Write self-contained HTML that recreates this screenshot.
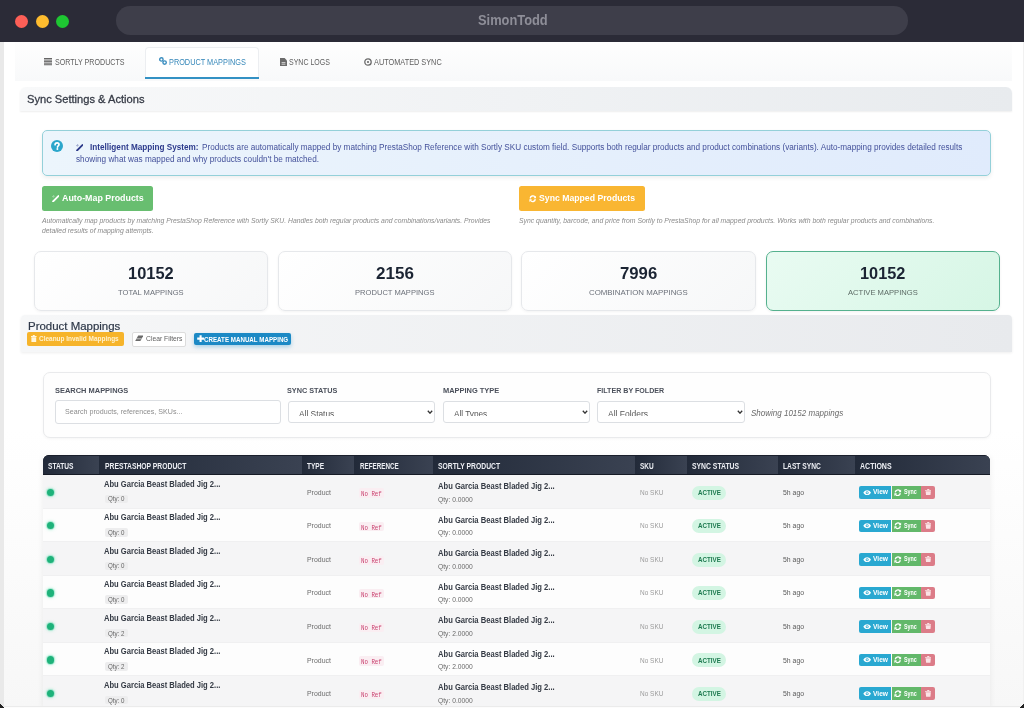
<!DOCTYPE html><html><head><meta charset="utf-8">
<style>
*{margin:0;padding:0;box-sizing:border-box}
html,body{width:1024px;height:708px;overflow:hidden;background:#fff;font-family:"Liberation Sans",sans-serif}
.a{position:absolute;white-space:nowrap}
.t{line-height:1;transform-origin:0 0}
</style></head><body><div style="position:absolute;left:0;top:0;width:1024px;height:708px;overflow:hidden;filter:blur(0.3px)">
<div class="a " style="left:0.00px;top:41.00px;width:3.50px;height:667.00px;background:#e9e9e9"></div>
<div class="a " style="left:1022.50px;top:41.00px;width:1.50px;height:667.00px;background:#f1f1f1"></div>
<div class="a " style="left:3.50px;top:430.00px;width:1019.00px;height:278.00px;background:linear-gradient(#ffffff,#f7f7f7)"></div>
<div class="a " style="left:0.00px;top:0.00px;width:1024.00px;height:41.50px;background:#2b2b37"></div>
<div class="a " style="left:15.00px;top:15.30px;width:13.00px;height:13.00px;background:#fd5f57;border-radius:50%"></div>
<div class="a " style="left:35.50px;top:15.30px;width:13.00px;height:13.00px;background:#febc2e;border-radius:50%"></div>
<div class="a " style="left:56.00px;top:15.30px;width:13.00px;height:13.00px;background:#1ec632;border-radius:50%"></div>
<div class="a " style="left:116.00px;top:6.30px;width:792.00px;height:28.50px;background:#3e3e4a;border-radius:14.25px"></div>
<div class="a t " style="left: 477.6px; top: 12.31px; font-size: 15.1px; color: rgb(142, 142, 152); font-weight: bold; transform: scaleX(0.8511);">SimonTodd</div>
<div class="a " style="left:15.00px;top:41.50px;width:997.00px;height:39.00px;background:linear-gradient(#fefefe,#f8f9fa)"></div>
<div class="a " style="left:144.80px;top:46.60px;width:114.60px;height:32.40px;background:#fff;border:1px solid #eceef1;border-bottom:none;border-radius:4px 4px 0 0"></div>
<div class="a " style="left:144.80px;top:76.70px;width:114.60px;height:2.40px;background:#3391c4"></div>
<svg class="a" style="left:44.00px;top:58.00px;" width="8" height="7.5" viewBox="0 0 8 7.5"><rect x="0" y="0.00" width="8" height="1.05" fill="#666"></rect><rect x="0" y="1.55" width="8" height="1.05" fill="#666"></rect><rect x="0" y="3.10" width="8" height="1.05" fill="#666"></rect><rect x="0" y="4.65" width="8" height="1.05" fill="#666"></rect><rect x="0" y="6.20" width="8" height="1.05" fill="#666"></rect></svg>
<div class="a t " style="left: 54.5px; top: 56.89px; font-size: 9.5px; color: rgb(96, 96, 96); transform: scaleX(0.7479);">SORTLY PRODUCTS</div>
<svg class="a" style="left:158.80px;top:57.30px;" width="8" height="8" viewBox="0 0 8 8"><g fill="none" stroke="#3a8dbf" stroke-width="1.4"><circle cx="2.4" cy="2.4" r="1.7"></circle><circle cx="5.6" cy="5.6" r="1.7"></circle></g></svg>
<div class="a t " style="left: 168.5px; top: 56.69px; font-size: 9.5px; color: rgb(53, 135, 185); transform: scaleX(0.7711);">PRODUCT MAPPINGS</div>
<svg class="a" style="left:279.60px;top:57.80px;" width="7" height="8" viewBox="0 0 7 8"><path d="M0 0H4.6L7 2.4V8H0Z" fill="#6b6b6b"></path><path d="M1.6 4.6H5.4M1.6 6.2H5.4" stroke="#fff" stroke-width="0.7"></path></svg>
<div class="a t " style="left: 289.1px; top: 56.89px; font-size: 9.5px; color: rgb(96, 96, 96); transform: scaleX(0.7378);">SYNC LOGS</div>
<svg class="a" style="left:363.90px;top:57.90px;" width="8" height="8" viewBox="0 0 8 8"><circle cx="4" cy="4" r="3.2" fill="none" stroke="#6b6b6b" stroke-width="1.3"></circle><circle cx="4" cy="4" r="1.1" fill="#6b6b6b"></circle></svg>
<div class="a t " style="left: 373.5px; top: 56.89px; font-size: 9.5px; color: rgb(96, 96, 96); transform: scaleX(0.7711);">AUTOMATED SYNC</div>
<div class="a " style="left:20.00px;top:86.80px;width:992.00px;height:24.50px;background:linear-gradient(90deg,#f8f9fa,#e8ebee);border-radius:6px 6px 0 0;box-shadow:0 1px 2px rgba(0,0,0,0.07)"></div>
<div class="a t " style="left: 27.2px; top: 92.86px; font-size: 11.6px; color: rgb(54, 59, 70); -webkit-text-stroke: 0.3px rgb(54, 59, 70); transform: scaleX(0.9596);">Sync Settings &amp; Actions</div>
<div class="a " style="left:41.70px;top:129.80px;width:949.30px;height:46.10px;background:linear-gradient(90deg,#ecf5fc,#e0ebfc);border:1.3px solid #94d0d9;border-radius:5px;box-shadow:0 2px 4px rgba(0,0,0,0.07)"></div>
<svg class="a" style="left:51.10px;top:140.40px;" width="12" height="12" viewBox="0 0 12 12"><circle cx="6" cy="6" r="6" fill="#2ba6cb"></circle><path d="M4.1 4.7C4.1 3.4 5 2.8 6.1 2.8S8 3.5 8 4.6C8 5.8 6.5 5.9 6.5 7.1" fill="none" stroke="#fff" stroke-width="1.7" stroke-linecap="round"></path><circle cx="6.4" cy="9.1" r="1" fill="#fff"></circle></svg>
<svg class="a" style="left:75.50px;top:143.50px;" width="7.5" height="7" viewBox="0 0 7.5 7"><path d="M1.1 6.4L6.4 1.1" stroke="#2d3a8a" stroke-width="1.9" stroke-linecap="round"></path><path d="M1.6 0.4L2.2 1.6M0.4 1.6L1.8 2" stroke="#2d3a8a" stroke-width="0.6"></path></svg>
<div class="a t " style="left: 90.3px; top: 142.83px; font-size: 8.3px; color: rgb(44, 58, 140); font-weight: bold; transform: scaleX(0.9856);">Intelligent Mapping System:</div>
<div class="a t " style="left: 201.7px; top: 142.83px; font-size: 8.3px; color: rgb(67, 80, 154); transform: scaleX(0.9872);">Products are automatically mapped by matching PrestaShop Reference with Sortly SKU custom field. Supports both regular products and product combinations (variants). Auto-mapping provides detailed results</div>
<div class="a t " style="left: 75.5px; top: 154.68px; font-size: 8.3px; color: rgb(67, 80, 154); transform: scaleX(0.9895);">showing what was mapped and why products couldn't be matched.</div>
<div class="a " style="left:41.60px;top:186.25px;width:111.40px;height:25.00px;background:#68be70;border-radius:2.5px"></div>
<svg class="a" style="left:51.90px;top:195.30px;" width="7.5" height="7" viewBox="0 0 7.5 7"><path d="M1.1 6.4L6.4 1.1" stroke="#fff" stroke-width="1.9" stroke-linecap="round"></path><path d="M1.6 0.4L2.2 1.6M0.4 1.6L1.8 2" stroke="#fff" stroke-width="0.6"></path></svg>
<div class="a t " style="left: 61.9px; top: 194.19px; font-size: 8.9px; color: rgb(255, 255, 255); font-weight: bold; transform: scaleX(0.9982);">Auto-Map Products</div>
<div class="a " style="left:519.40px;top:186.25px;width:125.80px;height:25.00px;background:#f9b632;border-radius:2.5px"></div>
<svg class="a" style="left:528.50px;top:195.30px;" width="7.5" height="7.5" viewBox="0 0 8 8"><g fill="none" stroke="#fff" stroke-width="1.5"><path d="M1.3 3.6A2.8 2.8 0 0 1 6.4 2.2"></path><path d="M6.7 4.4A2.8 2.8 0 0 1 1.6 5.8"></path></g><path d="M7.6 0.6V3.4H4.8Z" fill="#fff"></path><path d="M0.4 7.4V4.6H3.2Z" fill="#fff"></path></svg>
<div class="a t " style="left: 538.9px; top: 194.19px; font-size: 8.9px; color: rgb(255, 255, 255); font-weight: bold; transform: scaleX(0.9792);">Sync Mapped Products</div>
<div class="a t " style="left: 42px; top: 216.92px; font-size: 8.1px; color: rgb(138, 138, 138); font-style: italic; transform: scaleX(0.8413);">Automatically map products by matching PrestaShop Reference with Sortly SKU. Handles both regular products and combinations/variants. Provides</div>
<div class="a t " style="left: 42px; top: 226.92px; font-size: 8.1px; color: rgb(138, 138, 138); font-style: italic; transform: scaleX(0.8444);">detailed results of mapping attempts.</div>
<div class="a t " style="left: 519.4px; top: 216.92px; font-size: 8.1px; color: rgb(138, 138, 138); font-style: italic; transform: scaleX(0.8443);">Sync quantity, barcode, and price from Sortly to PrestaShop for all mapped products. Works with both regular products and combinations.</div>
<div class="a " style="left:33.50px;top:251.10px;width:234.00px;height:59.90px;background:linear-gradient(135deg,#ffffff,#f6f7f8);border:1px solid #e6e8eb;border-radius:7px;box-shadow:0 1px 3px rgba(0,0,0,0.05)"></div>
<div class="a t " style="left: 127.65px; top: 265.44px; font-size: 17.4px; color: rgb(27, 36, 51); font-weight: bold; transform: scaleX(0.945);">10152</div>
<div class="a t " style="left: 117.7px; top: 288.75px; font-size: 7.9px; color: rgb(107, 112, 121); transform: scaleX(0.961);">TOTAL MAPPINGS</div>
<div class="a " style="left:277.50px;top:251.10px;width:234.00px;height:59.90px;background:linear-gradient(135deg,#ffffff,#f6f7f8);border:1px solid #e6e8eb;border-radius:7px;box-shadow:0 1px 3px rgba(0,0,0,0.05)"></div>
<div class="a t " style="left: 375.55px; top: 265.44px; font-size: 17.4px; color: rgb(27, 36, 51); font-weight: bold; transform: scaleX(0.9796);">2156</div>
<div class="a t " style="left: 354.75px; top: 288.75px; font-size: 7.9px; color: rgb(107, 112, 121); transform: scaleX(0.9611);">PRODUCT MAPPINGS</div>
<div class="a " style="left:521.00px;top:251.10px;width:235.00px;height:59.90px;background:linear-gradient(135deg,#ffffff,#f6f7f8);border:1px solid #e6e8eb;border-radius:7px;box-shadow:0 1px 3px rgba(0,0,0,0.05)"></div>
<div class="a t " style="left: 619.9px; top: 265.44px; font-size: 17.4px; color: rgb(27, 36, 51); font-weight: bold; transform: scaleX(0.9616);">7996</div>
<div class="a t " style="left: 589.15px; top: 288.75px; font-size: 7.9px; color: rgb(107, 112, 121); transform: scaleX(0.9976);">COMBINATION MAPPINGS</div>
<div class="a " style="left:765.50px;top:251.10px;width:234.10px;height:59.90px;background:linear-gradient(135deg,#e9fbf2,#d6f6e5);border:1.8px solid #55b18e;border-radius:7px;box-shadow:0 1px 3px rgba(0,0,0,0.06)"></div>
<div class="a t " style="left: 859.85px; top: 265.44px; font-size: 17.4px; color: rgb(27, 36, 51); font-weight: bold; transform: scaleX(0.9388);">10152</div>
<div class="a t " style="left: 847.65px; top: 288.75px; font-size: 7.9px; color: rgb(93, 107, 102); transform: scaleX(0.9646);">ACTIVE MAPPINGS</div>
<div class="a " style="left:20.70px;top:315.00px;width:991.30px;height:37.30px;background:linear-gradient(90deg,#f6f7f8,#e8eaed);border-radius:4px 4px 0 0;box-shadow:0 1px 3px rgba(0,0,0,0.07)"></div>
<div class="a t " style="left: 27.5px; top: 321.14px; font-size: 11.1px; color: rgb(46, 56, 72); -webkit-text-stroke: 0.2px rgb(46, 56, 72); transform: scaleX(1.0322);">Product Mappings</div>
<div class="a " style="left:27.00px;top:332.40px;width:96.80px;height:13.70px;background:#f6b42b;border-radius:2px"></div>
<svg class="a" style="left:31.40px;top:334.60px;" width="5.6" height="7.4" viewBox="0 0 5.6 7.4"><path d="M0 0.9H5.6V2H0Z M1.8 0H3.8V0.9H1.8Z M0.4 2.3H5.2V6.8Q5.2 7.4 4.6 7.4H1Q0.4 7.4 0.4 6.8Z" fill="#fff6dc"></path></svg>
<div class="a t " style="left: 39.4px; top: 335.43px; font-size: 7.4px; color: rgb(255, 242, 207); font-weight: bold; transform: scaleX(0.8742);">Cleanup Invalid Mappings</div>
<div class="a " style="left:131.50px;top:332.30px;width:54.80px;height:14.30px;background:#fff;border:1px solid #dcdcdc;border-radius:2px"></div>
<svg class="a" style="left:134.80px;top:335.40px;" width="8.6" height="6.4" viewBox="0 0 8.6 6"><path d="M3.2 0.2H8.4L5.4 5.8H0.2Z" fill="#6b6b6b"></path><path d="M1.4 3.6H6.6" stroke="#fff" stroke-width="0.6"></path></svg>
<div class="a t " style="left: 145.9px; top: 335.42px; font-size: 8.1px; color: rgb(95, 95, 95); transform: scaleX(0.8344);">Clear Filters</div>
<div class="a " style="left:193.70px;top:332.80px;width:97.40px;height:12.60px;background:#1b89c5;border-radius:2px;box-shadow:0 2px 4px rgba(26,139,200,0.35)"></div>
<svg class="a" style="left:196.80px;top:335.40px;" width="7.2" height="7.2" viewBox="0 0 7.2 7.2"><path d="M3.6 0.2V7M0.2 3.6H7" stroke="#fff" stroke-width="2.1"></path></svg>
<div class="a t " style="left: 204px; top: 335.66px; font-size: 7.8px; color: rgb(255, 255, 255); font-weight: bold; transform: scaleX(0.7955);">CREATE MANUAL MAPPING</div>
<div class="a " style="left:42.50px;top:371.80px;width:948.10px;height:66.40px;background:#fefefe;border:1px solid #e9eaec;border-radius:7px;box-shadow:0 1px 3px rgba(0,0,0,0.04)"></div>
<div class="a t " style="left: 54.7px; top: 386.92px; font-size: 8.1px; color: rgb(75, 80, 91); font-weight: bold; transform: scaleX(0.9207);">SEARCH MAPPINGS</div>
<div class="a t " style="left: 286.9px; top: 386.92px; font-size: 8.1px; color: rgb(75, 80, 91); font-weight: bold; transform: scaleX(0.8995);">SYNC STATUS</div>
<div class="a t " style="left: 442.5px; top: 386.92px; font-size: 8.1px; color: rgb(75, 80, 91); font-weight: bold; transform: scaleX(0.9195);">MAPPING TYPE</div>
<div class="a t " style="left: 596.6px; top: 386.92px; font-size: 8.1px; color: rgb(75, 80, 91); font-weight: bold; transform: scaleX(0.8774);">FILTER BY FOLDER</div>
<div class="a " style="left:55.20px;top:400.10px;width:225.40px;height:23.80px;background:#fff;border:1px solid #dcdfe3;border-radius:3px"></div>
<div class="a t " style="left: 64.6px; top: 407.92px; font-size: 8.1px; color: rgb(140, 140, 140); transform: scaleX(0.8787);">Search products, references, SKUs...</div>
<div class="a " style="left:287.80px;top:400.80px;width:147.50px;height:22.70px;background:#fff;border:1px solid #dcdfe3;border-radius:3px"></div>
<div class="a" style="left:288.80px;top:401.8px;width:127.50px;height:14.5px;overflow:hidden">
<div class="a t" style="left: 9.95px; top: 8.02px; font-size: 8.7px; color: rgb(85, 85, 85); transform: scaleX(0.9604);">All Status</div></div>
<svg class="a" style="left:427.10px;top:409.50px;" width="6" height="4.4" viewBox="0 0 6 4.4"><path d="M0.8 0.8L3 3.2L5.2 0.8" fill="none" stroke="#333" stroke-width="1.3"></path></svg>
<div class="a " style="left:442.50px;top:400.80px;width:147.80px;height:22.70px;background:#fff;border:1px solid #dcdfe3;border-radius:3px"></div>
<div class="a" style="left:443.50px;top:401.8px;width:127.80px;height:14.5px;overflow:hidden">
<div class="a t" style="left: 10.5px; top: 8.02px; font-size: 8.7px; color: rgb(85, 85, 85); transform: scaleX(0.946);">All Types</div></div>
<svg class="a" style="left:582.10px;top:409.50px;" width="6" height="4.4" viewBox="0 0 6 4.4"><path d="M0.8 0.8L3 3.2L5.2 0.8" fill="none" stroke="#333" stroke-width="1.3"></path></svg>
<div class="a " style="left:597.40px;top:400.80px;width:147.60px;height:22.70px;background:#fff;border:1px solid #dcdfe3;border-radius:3px"></div>
<div class="a" style="left:598.40px;top:401.8px;width:127.60px;height:14.5px;overflow:hidden">
<div class="a t" style="left: 10.1px; top: 8.02px; font-size: 8.7px; color: rgb(85, 85, 85); transform: scaleX(0.9745);">All Folders</div></div>
<svg class="a" style="left:736.80px;top:409.50px;" width="6" height="4.4" viewBox="0 0 6 4.4"><path d="M0.8 0.8L3 3.2L5.2 0.8" fill="none" stroke="#333" stroke-width="1.3"></path></svg>
<div class="a t " style="left: 751.4px; top: 408.94px; font-size: 8.6px; color: rgb(106, 106, 106); font-style: italic; transform: scaleX(0.9322);">Showing 10152 mappings</div>
<div class="a " style="left:42.80px;top:455.10px;width:947.50px;height:250.70px;background:#fff;box-shadow:0 2px 6px rgba(0,0,0,0.07)"></div>
<div class="a" style="left:42.8px;top:455.1px;width:947.5px;height:20px;border-radius:6px 6px 0 0;overflow:hidden;background:#1c2231">
<div class="a" style="left:0.00px;top:0;width:56.60px;height:20px;background:linear-gradient(90deg,#222a39,#3a4252);border-top:1px solid #1a1f2c;border-bottom:1px solid #161b26"></div>
<div class="a" style="left:56.60px;top:0;width:202.80px;height:20px;background:linear-gradient(90deg,#222a39,#3a4252);border-top:1px solid #1a1f2c;border-bottom:1px solid #161b26"></div>
<div class="a" style="left:259.40px;top:0;width:52.20px;height:20px;background:linear-gradient(90deg,#222a39,#3a4252);border-top:1px solid #1a1f2c;border-bottom:1px solid #161b26"></div>
<div class="a" style="left:311.60px;top:0;width:78.60px;height:20px;background:linear-gradient(90deg,#222a39,#3a4252);border-top:1px solid #1a1f2c;border-bottom:1px solid #161b26"></div>
<div class="a" style="left:390.20px;top:0;width:201.80px;height:20px;background:linear-gradient(90deg,#222a39,#3a4252);border-top:1px solid #1a1f2c;border-bottom:1px solid #161b26"></div>
<div class="a" style="left:592.00px;top:0;width:52.00px;height:20px;background:linear-gradient(90deg,#222a39,#3a4252);border-top:1px solid #1a1f2c;border-bottom:1px solid #161b26"></div>
<div class="a" style="left:644.00px;top:0;width:90.90px;height:20px;background:linear-gradient(90deg,#222a39,#3a4252);border-top:1px solid #1a1f2c;border-bottom:1px solid #161b26"></div>
<div class="a" style="left:734.90px;top:0;width:77.20px;height:20px;background:linear-gradient(90deg,#222a39,#3a4252);border-top:1px solid #1a1f2c;border-bottom:1px solid #161b26"></div>
<div class="a" style="left:812.10px;top:0;width:135.40px;height:20px;background:linear-gradient(90deg,#222a39,#3a4252);border-top:1px solid #1a1f2c;border-bottom:1px solid #161b26"></div>
</div>
<div class="a t " style="left: 47.8px; top: 461.7px; font-size: 8.5px; color: rgb(236, 238, 243); font-weight: bold; transform: scaleX(0.7786);">STATUS</div>
<div class="a t " style="left: 104.5px; top: 461.7px; font-size: 8.5px; color: rgb(236, 238, 243); font-weight: bold; transform: scaleX(0.7957);">PRESTASHOP PRODUCT</div>
<div class="a t " style="left: 306.9px; top: 461.7px; font-size: 8.5px; color: rgb(236, 238, 243); font-weight: bold; transform: scaleX(0.7702);">TYPE</div>
<div class="a t " style="left: 359.6px; top: 461.7px; font-size: 8.5px; color: rgb(236, 238, 243); font-weight: bold; transform: scaleX(0.738);">REFERENCE</div>
<div class="a t " style="left: 437.6px; top: 461.7px; font-size: 8.5px; color: rgb(236, 238, 243); font-weight: bold; transform: scaleX(0.7968);">SORTLY PRODUCT</div>
<div class="a t " style="left: 640.4px; top: 461.7px; font-size: 8.5px; color: rgb(236, 238, 243); font-weight: bold; transform: scaleX(0.7631);">SKU</div>
<div class="a t " style="left: 692.4px; top: 461.7px; font-size: 8.5px; color: rgb(236, 238, 243); font-weight: bold; transform: scaleX(0.8021);">SYNC STATUS</div>
<div class="a t " style="left: 783.3px; top: 461.7px; font-size: 8.5px; color: rgb(236, 238, 243); font-weight: bold; transform: scaleX(0.7847);">LAST SYNC</div>
<div class="a t " style="left: 860px; top: 461.7px; font-size: 8.5px; color: rgb(236, 238, 243); font-weight: bold; transform: scaleX(0.8261);">ACTIONS</div>
<div class="a " style="left:42.80px;top:475.00px;width:947.50px;height:33.55px;background:#f5f5f6;border-bottom:1px solid #f0f0f1"></div>
<div class="a " style="left:46.90px;top:488.50px;width:7.40px;height:7.40px;background:#1eb27a;border-radius:50%;box-shadow:0 0 0 1px rgba(40,200,150,0.22),0 0 3px 1px rgba(60,220,160,0.35)"></div>
<div class="a t " style="left: 104.4px; top: 479.71px; font-size: 8.8px; color: rgb(52, 58, 68); font-weight: bold; transform: scaleX(0.8626);">Abu Garcia Beast Bladed Jig 2...</div>
<div class="a " style="left:105.00px;top:494.50px;width:22.80px;height:8.50px;background:#ededee;border-radius:2px"></div>
<div class="a t " style="left: 107.6px; top: 495.31px; font-size: 7.5px; color: rgb(102, 102, 102); transform: scaleX(0.8244);">Qty: 0</div>
<div class="a t " style="left: 306.7px; top: 488.82px; font-size: 8.1px; color: rgb(107, 107, 107); transform: scaleX(0.8564);">Product</div>
<div class="a " style="left:359.00px;top:488.45px;width:25.00px;height:9.35px;background:#faeef2;border-radius:2px"></div>
<div class="a t " style="left: 361.2px; top: 490.98px; font-size: 6.7px; color: rgb(201, 65, 111); font-family: &quot;Liberation Mono&quot;, monospace; transform: scaleX(0.8633);">No Ref</div>
<div class="a t " style="left: 437.5px; top: 482.06px; font-size: 8.8px; color: rgb(52, 58, 68); font-weight: bold; transform: scaleX(0.8648);">Abu Garcia Beast Bladed Jig 2...</div>
<div class="a t " style="left: 437.5px; top: 495.65px; font-size: 7.9px; color: rgb(106, 106, 106); transform: scaleX(0.8506);">Qty: 0.0000</div>
<div class="a t " style="left: 640.2px; top: 488.82px; font-size: 8.1px; color: rgb(154, 154, 154); transform: scaleX(0.8);">No SKU</div>
<div class="a " style="left:692.20px;top:485.60px;width:33.80px;height:14.10px;background:#d3f5e3;border-radius:7px"></div>
<div class="a t " style="left: 697.5px; top: 488.76px; font-size: 7.8px; color: rgb(30, 122, 80); font-weight: bold; transform: scaleX(0.7974);">ACTIVE</div>
<div class="a t " style="left: 782.8px; top: 488.82px; font-size: 8.1px; color: rgb(91, 91, 91); transform: scaleX(0.852);">5h ago</div>
<div class="a " style="left:859.20px;top:486.10px;width:32.30px;height:12.50px;background:#29a8d1;border-radius:2px 0 0 2px"></div>
<svg class="a" style="left:862.90px;top:489.60px;" width="8.3" height="5.4" viewBox="0 0 8.3 5.4"><path d="M0.3 2.7C1.5 0.9 2.8 0.2 4.15 0.2S6.8 0.9 8 2.7C6.8 4.5 5.5 5.2 4.15 5.2S1.5 4.5 0.3 2.7Z" fill="#fff"></path><circle cx="4.15" cy="2.7" r="1.5" fill="#29a8d1"></circle><circle cx="4.15" cy="2.7" r="0.7" fill="#fff"></circle></svg>
<div class="a t " style="left: 872.8px; top: 489.32px; font-size: 6.8px; color: rgb(255, 255, 255); font-weight: bold; transform: scaleX(0.9756);">View</div>
<div class="a " style="left:891.50px;top:486.10px;width:30.10px;height:12.50px;background:#62b86a;border-radius:0 1px 1px 0"></div>
<svg class="a" style="left:894.40px;top:488.60px;" width="7.5" height="7.5" viewBox="0 0 8 8"><g fill="none" stroke="#fff" stroke-width="1.4"><path d="M1.3 3.6A2.8 2.8 0 0 1 6.4 2.2"></path><path d="M6.7 4.4A2.8 2.8 0 0 1 1.6 5.8"></path></g><path d="M7.6 0.6V3.4H4.8Z" fill="#fff"></path><path d="M0.4 7.4V4.6H3.2Z" fill="#fff"></path></svg>
<div class="a t " style="left: 904px; top: 489.32px; font-size: 6.8px; color: rgb(255, 255, 255); font-weight: bold; transform: scaleX(0.7877);">Sync</div>
<div class="a " style="left:921.40px;top:486.10px;width:13.40px;height:12.50px;background:#dc7c88;border-radius:1px 2px 2px 1px"></div>
<svg class="a" style="left:924.70px;top:488.60px;" width="6.5" height="6.7" viewBox="0 0 6.5 6.7"><path d="M0 0.9H6.5V1.8H0Z M2.2 0H4.3V0.9H2.2Z M0.6 2.2H5.9L5.4 6.7H1.1Z" fill="#fbe3e6"></path></svg>
<div class="a " style="left:42.80px;top:508.55px;width:947.50px;height:33.55px;background:#fdfdfd;border-bottom:1px solid #f0f0f1"></div>
<div class="a " style="left:46.90px;top:522.05px;width:7.40px;height:7.40px;background:#1eb27a;border-radius:50%;box-shadow:0 0 0 1px rgba(40,200,150,0.22),0 0 3px 1px rgba(60,220,160,0.35)"></div>
<div class="a t " style="left: 104.4px; top: 513.26px; font-size: 8.8px; color: rgb(52, 58, 68); font-weight: bold; transform: scaleX(0.8626);">Abu Garcia Beast Bladed Jig 2...</div>
<div class="a " style="left:105.00px;top:528.05px;width:22.80px;height:8.50px;background:#ededee;border-radius:2px"></div>
<div class="a t " style="left: 107.6px; top: 528.86px; font-size: 7.5px; color: rgb(102, 102, 102); transform: scaleX(0.8244);">Qty: 0</div>
<div class="a t " style="left: 306.7px; top: 522.37px; font-size: 8.1px; color: rgb(107, 107, 107); transform: scaleX(0.8564);">Product</div>
<div class="a " style="left:359.00px;top:522.00px;width:25.00px;height:9.35px;background:#faeef2;border-radius:2px"></div>
<div class="a t " style="left: 361.2px; top: 524.53px; font-size: 6.7px; color: rgb(201, 65, 111); font-family: &quot;Liberation Mono&quot;, monospace; transform: scaleX(0.8633);">No Ref</div>
<div class="a t " style="left: 437.5px; top: 515.61px; font-size: 8.8px; color: rgb(52, 58, 68); font-weight: bold; transform: scaleX(0.8648);">Abu Garcia Beast Bladed Jig 2...</div>
<div class="a t " style="left: 437.5px; top: 529.2px; font-size: 7.9px; color: rgb(106, 106, 106); transform: scaleX(0.8506);">Qty: 0.0000</div>
<div class="a t " style="left: 640.2px; top: 522.37px; font-size: 8.1px; color: rgb(154, 154, 154); transform: scaleX(0.8);">No SKU</div>
<div class="a " style="left:692.20px;top:519.15px;width:33.80px;height:14.10px;background:#d3f5e3;border-radius:7px"></div>
<div class="a t " style="left: 697.5px; top: 522.31px; font-size: 7.8px; color: rgb(30, 122, 80); font-weight: bold; transform: scaleX(0.7974);">ACTIVE</div>
<div class="a t " style="left: 782.8px; top: 522.37px; font-size: 8.1px; color: rgb(91, 91, 91); transform: scaleX(0.852);">5h ago</div>
<div class="a " style="left:859.20px;top:519.65px;width:32.30px;height:12.50px;background:#29a8d1;border-radius:2px 0 0 2px"></div>
<svg class="a" style="left:862.90px;top:523.15px;" width="8.3" height="5.4" viewBox="0 0 8.3 5.4"><path d="M0.3 2.7C1.5 0.9 2.8 0.2 4.15 0.2S6.8 0.9 8 2.7C6.8 4.5 5.5 5.2 4.15 5.2S1.5 4.5 0.3 2.7Z" fill="#fff"></path><circle cx="4.15" cy="2.7" r="1.5" fill="#29a8d1"></circle><circle cx="4.15" cy="2.7" r="0.7" fill="#fff"></circle></svg>
<div class="a t " style="left: 872.8px; top: 522.87px; font-size: 6.8px; color: rgb(255, 255, 255); font-weight: bold; transform: scaleX(0.9756);">View</div>
<div class="a " style="left:891.50px;top:519.65px;width:30.10px;height:12.50px;background:#62b86a;border-radius:0 1px 1px 0"></div>
<svg class="a" style="left:894.40px;top:522.15px;" width="7.5" height="7.5" viewBox="0 0 8 8"><g fill="none" stroke="#fff" stroke-width="1.4"><path d="M1.3 3.6A2.8 2.8 0 0 1 6.4 2.2"></path><path d="M6.7 4.4A2.8 2.8 0 0 1 1.6 5.8"></path></g><path d="M7.6 0.6V3.4H4.8Z" fill="#fff"></path><path d="M0.4 7.4V4.6H3.2Z" fill="#fff"></path></svg>
<div class="a t " style="left: 904px; top: 522.87px; font-size: 6.8px; color: rgb(255, 255, 255); font-weight: bold; transform: scaleX(0.7877);">Sync</div>
<div class="a " style="left:921.40px;top:519.65px;width:13.40px;height:12.50px;background:#dc7c88;border-radius:1px 2px 2px 1px"></div>
<svg class="a" style="left:924.70px;top:522.15px;" width="6.5" height="6.7" viewBox="0 0 6.5 6.7"><path d="M0 0.9H6.5V1.8H0Z M2.2 0H4.3V0.9H2.2Z M0.6 2.2H5.9L5.4 6.7H1.1Z" fill="#fbe3e6"></path></svg>
<div class="a " style="left:42.80px;top:542.10px;width:947.50px;height:33.55px;background:#f5f5f6;border-bottom:1px solid #f0f0f1"></div>
<div class="a " style="left:46.90px;top:555.60px;width:7.40px;height:7.40px;background:#1eb27a;border-radius:50%;box-shadow:0 0 0 1px rgba(40,200,150,0.22),0 0 3px 1px rgba(60,220,160,0.35)"></div>
<div class="a t " style="left: 104.4px; top: 546.81px; font-size: 8.8px; color: rgb(52, 58, 68); font-weight: bold; transform: scaleX(0.8626);">Abu Garcia Beast Bladed Jig 2...</div>
<div class="a " style="left:105.00px;top:561.60px;width:22.80px;height:8.50px;background:#ededee;border-radius:2px"></div>
<div class="a t " style="left: 107.6px; top: 562.41px; font-size: 7.5px; color: rgb(102, 102, 102); transform: scaleX(0.8244);">Qty: 0</div>
<div class="a t " style="left: 306.7px; top: 555.92px; font-size: 8.1px; color: rgb(107, 107, 107); transform: scaleX(0.8564);">Product</div>
<div class="a " style="left:359.00px;top:555.55px;width:25.00px;height:9.35px;background:#faeef2;border-radius:2px"></div>
<div class="a t " style="left: 361.2px; top: 558.08px; font-size: 6.7px; color: rgb(201, 65, 111); font-family: &quot;Liberation Mono&quot;, monospace; transform: scaleX(0.8633);">No Ref</div>
<div class="a t " style="left: 437.5px; top: 549.16px; font-size: 8.8px; color: rgb(52, 58, 68); font-weight: bold; transform: scaleX(0.8648);">Abu Garcia Beast Bladed Jig 2...</div>
<div class="a t " style="left: 437.5px; top: 562.75px; font-size: 7.9px; color: rgb(106, 106, 106); transform: scaleX(0.8506);">Qty: 0.0000</div>
<div class="a t " style="left: 640.2px; top: 555.92px; font-size: 8.1px; color: rgb(154, 154, 154); transform: scaleX(0.8);">No SKU</div>
<div class="a " style="left:692.20px;top:552.70px;width:33.80px;height:14.10px;background:#d3f5e3;border-radius:7px"></div>
<div class="a t " style="left: 697.5px; top: 555.86px; font-size: 7.8px; color: rgb(30, 122, 80); font-weight: bold; transform: scaleX(0.7974);">ACTIVE</div>
<div class="a t " style="left: 782.8px; top: 555.92px; font-size: 8.1px; color: rgb(91, 91, 91); transform: scaleX(0.852);">5h ago</div>
<div class="a " style="left:859.20px;top:553.20px;width:32.30px;height:12.50px;background:#29a8d1;border-radius:2px 0 0 2px"></div>
<svg class="a" style="left:862.90px;top:556.70px;" width="8.3" height="5.4" viewBox="0 0 8.3 5.4"><path d="M0.3 2.7C1.5 0.9 2.8 0.2 4.15 0.2S6.8 0.9 8 2.7C6.8 4.5 5.5 5.2 4.15 5.2S1.5 4.5 0.3 2.7Z" fill="#fff"></path><circle cx="4.15" cy="2.7" r="1.5" fill="#29a8d1"></circle><circle cx="4.15" cy="2.7" r="0.7" fill="#fff"></circle></svg>
<div class="a t " style="left: 872.8px; top: 556.42px; font-size: 6.8px; color: rgb(255, 255, 255); font-weight: bold; transform: scaleX(0.9756);">View</div>
<div class="a " style="left:891.50px;top:553.20px;width:30.10px;height:12.50px;background:#62b86a;border-radius:0 1px 1px 0"></div>
<svg class="a" style="left:894.40px;top:555.70px;" width="7.5" height="7.5" viewBox="0 0 8 8"><g fill="none" stroke="#fff" stroke-width="1.4"><path d="M1.3 3.6A2.8 2.8 0 0 1 6.4 2.2"></path><path d="M6.7 4.4A2.8 2.8 0 0 1 1.6 5.8"></path></g><path d="M7.6 0.6V3.4H4.8Z" fill="#fff"></path><path d="M0.4 7.4V4.6H3.2Z" fill="#fff"></path></svg>
<div class="a t " style="left: 904px; top: 556.42px; font-size: 6.8px; color: rgb(255, 255, 255); font-weight: bold; transform: scaleX(0.7877);">Sync</div>
<div class="a " style="left:921.40px;top:553.20px;width:13.40px;height:12.50px;background:#dc7c88;border-radius:1px 2px 2px 1px"></div>
<svg class="a" style="left:924.70px;top:555.70px;" width="6.5" height="6.7" viewBox="0 0 6.5 6.7"><path d="M0 0.9H6.5V1.8H0Z M2.2 0H4.3V0.9H2.2Z M0.6 2.2H5.9L5.4 6.7H1.1Z" fill="#fbe3e6"></path></svg>
<div class="a " style="left:42.80px;top:575.65px;width:947.50px;height:33.55px;background:#fdfdfd;border-bottom:1px solid #f0f0f1"></div>
<div class="a " style="left:46.90px;top:589.15px;width:7.40px;height:7.40px;background:#1eb27a;border-radius:50%;box-shadow:0 0 0 1px rgba(40,200,150,0.22),0 0 3px 1px rgba(60,220,160,0.35)"></div>
<div class="a t " style="left: 104.4px; top: 580.36px; font-size: 8.8px; color: rgb(52, 58, 68); font-weight: bold; transform: scaleX(0.8626);">Abu Garcia Beast Bladed Jig 2...</div>
<div class="a " style="left:105.00px;top:595.15px;width:22.80px;height:8.50px;background:#ededee;border-radius:2px"></div>
<div class="a t " style="left: 107.6px; top: 595.96px; font-size: 7.5px; color: rgb(102, 102, 102); transform: scaleX(0.8244);">Qty: 0</div>
<div class="a t " style="left: 306.7px; top: 589.47px; font-size: 8.1px; color: rgb(107, 107, 107); transform: scaleX(0.8564);">Product</div>
<div class="a " style="left:359.00px;top:589.10px;width:25.00px;height:9.35px;background:#faeef2;border-radius:2px"></div>
<div class="a t " style="left: 361.2px; top: 591.63px; font-size: 6.7px; color: rgb(201, 65, 111); font-family: &quot;Liberation Mono&quot;, monospace; transform: scaleX(0.8633);">No Ref</div>
<div class="a t " style="left: 437.5px; top: 582.71px; font-size: 8.8px; color: rgb(52, 58, 68); font-weight: bold; transform: scaleX(0.8648);">Abu Garcia Beast Bladed Jig 2...</div>
<div class="a t " style="left: 437.5px; top: 596.3px; font-size: 7.9px; color: rgb(106, 106, 106); transform: scaleX(0.8506);">Qty: 0.0000</div>
<div class="a t " style="left: 640.2px; top: 589.47px; font-size: 8.1px; color: rgb(154, 154, 154); transform: scaleX(0.8);">No SKU</div>
<div class="a " style="left:692.20px;top:586.25px;width:33.80px;height:14.10px;background:#d3f5e3;border-radius:7px"></div>
<div class="a t " style="left: 697.5px; top: 589.41px; font-size: 7.8px; color: rgb(30, 122, 80); font-weight: bold; transform: scaleX(0.7974);">ACTIVE</div>
<div class="a t " style="left: 782.8px; top: 589.47px; font-size: 8.1px; color: rgb(91, 91, 91); transform: scaleX(0.852);">5h ago</div>
<div class="a " style="left:859.20px;top:586.75px;width:32.30px;height:12.50px;background:#29a8d1;border-radius:2px 0 0 2px"></div>
<svg class="a" style="left:862.90px;top:590.25px;" width="8.3" height="5.4" viewBox="0 0 8.3 5.4"><path d="M0.3 2.7C1.5 0.9 2.8 0.2 4.15 0.2S6.8 0.9 8 2.7C6.8 4.5 5.5 5.2 4.15 5.2S1.5 4.5 0.3 2.7Z" fill="#fff"></path><circle cx="4.15" cy="2.7" r="1.5" fill="#29a8d1"></circle><circle cx="4.15" cy="2.7" r="0.7" fill="#fff"></circle></svg>
<div class="a t " style="left: 872.8px; top: 589.97px; font-size: 6.8px; color: rgb(255, 255, 255); font-weight: bold; transform: scaleX(0.9756);">View</div>
<div class="a " style="left:891.50px;top:586.75px;width:30.10px;height:12.50px;background:#62b86a;border-radius:0 1px 1px 0"></div>
<svg class="a" style="left:894.40px;top:589.25px;" width="7.5" height="7.5" viewBox="0 0 8 8"><g fill="none" stroke="#fff" stroke-width="1.4"><path d="M1.3 3.6A2.8 2.8 0 0 1 6.4 2.2"></path><path d="M6.7 4.4A2.8 2.8 0 0 1 1.6 5.8"></path></g><path d="M7.6 0.6V3.4H4.8Z" fill="#fff"></path><path d="M0.4 7.4V4.6H3.2Z" fill="#fff"></path></svg>
<div class="a t " style="left: 904px; top: 589.97px; font-size: 6.8px; color: rgb(255, 255, 255); font-weight: bold; transform: scaleX(0.7877);">Sync</div>
<div class="a " style="left:921.40px;top:586.75px;width:13.40px;height:12.50px;background:#dc7c88;border-radius:1px 2px 2px 1px"></div>
<svg class="a" style="left:924.70px;top:589.25px;" width="6.5" height="6.7" viewBox="0 0 6.5 6.7"><path d="M0 0.9H6.5V1.8H0Z M2.2 0H4.3V0.9H2.2Z M0.6 2.2H5.9L5.4 6.7H1.1Z" fill="#fbe3e6"></path></svg>
<div class="a " style="left:42.80px;top:609.20px;width:947.50px;height:33.55px;background:#f5f5f6;border-bottom:1px solid #f0f0f1"></div>
<div class="a " style="left:46.90px;top:622.70px;width:7.40px;height:7.40px;background:#1eb27a;border-radius:50%;box-shadow:0 0 0 1px rgba(40,200,150,0.22),0 0 3px 1px rgba(60,220,160,0.35)"></div>
<div class="a t " style="left: 104.4px; top: 613.91px; font-size: 8.8px; color: rgb(52, 58, 68); font-weight: bold; transform: scaleX(0.8626);">Abu Garcia Beast Bladed Jig 2...</div>
<div class="a " style="left:105.00px;top:628.70px;width:22.80px;height:8.50px;background:#ededee;border-radius:2px"></div>
<div class="a t " style="left: 107.6px; top: 629.51px; font-size: 7.5px; color: rgb(102, 102, 102); transform: scaleX(0.8244);">Qty: 2</div>
<div class="a t " style="left: 306.7px; top: 623.02px; font-size: 8.1px; color: rgb(107, 107, 107); transform: scaleX(0.8564);">Product</div>
<div class="a " style="left:359.00px;top:622.65px;width:25.00px;height:9.35px;background:#faeef2;border-radius:2px"></div>
<div class="a t " style="left: 361.2px; top: 625.18px; font-size: 6.7px; color: rgb(201, 65, 111); font-family: &quot;Liberation Mono&quot;, monospace; transform: scaleX(0.8633);">No Ref</div>
<div class="a t " style="left: 437.5px; top: 616.26px; font-size: 8.8px; color: rgb(52, 58, 68); font-weight: bold; transform: scaleX(0.8648);">Abu Garcia Beast Bladed Jig 2...</div>
<div class="a t " style="left: 437.5px; top: 629.85px; font-size: 7.9px; color: rgb(106, 106, 106); transform: scaleX(0.8506);">Qty: 2.0000</div>
<div class="a t " style="left: 640.2px; top: 623.02px; font-size: 8.1px; color: rgb(154, 154, 154); transform: scaleX(0.8);">No SKU</div>
<div class="a " style="left:692.20px;top:619.80px;width:33.80px;height:14.10px;background:#d3f5e3;border-radius:7px"></div>
<div class="a t " style="left: 697.5px; top: 622.96px; font-size: 7.8px; color: rgb(30, 122, 80); font-weight: bold; transform: scaleX(0.7974);">ACTIVE</div>
<div class="a t " style="left: 782.8px; top: 623.02px; font-size: 8.1px; color: rgb(91, 91, 91); transform: scaleX(0.852);">5h ago</div>
<div class="a " style="left:859.20px;top:620.30px;width:32.30px;height:12.50px;background:#29a8d1;border-radius:2px 0 0 2px"></div>
<svg class="a" style="left:862.90px;top:623.80px;" width="8.3" height="5.4" viewBox="0 0 8.3 5.4"><path d="M0.3 2.7C1.5 0.9 2.8 0.2 4.15 0.2S6.8 0.9 8 2.7C6.8 4.5 5.5 5.2 4.15 5.2S1.5 4.5 0.3 2.7Z" fill="#fff"></path><circle cx="4.15" cy="2.7" r="1.5" fill="#29a8d1"></circle><circle cx="4.15" cy="2.7" r="0.7" fill="#fff"></circle></svg>
<div class="a t " style="left: 872.8px; top: 623.52px; font-size: 6.8px; color: rgb(255, 255, 255); font-weight: bold; transform: scaleX(0.9756);">View</div>
<div class="a " style="left:891.50px;top:620.30px;width:30.10px;height:12.50px;background:#62b86a;border-radius:0 1px 1px 0"></div>
<svg class="a" style="left:894.40px;top:622.80px;" width="7.5" height="7.5" viewBox="0 0 8 8"><g fill="none" stroke="#fff" stroke-width="1.4"><path d="M1.3 3.6A2.8 2.8 0 0 1 6.4 2.2"></path><path d="M6.7 4.4A2.8 2.8 0 0 1 1.6 5.8"></path></g><path d="M7.6 0.6V3.4H4.8Z" fill="#fff"></path><path d="M0.4 7.4V4.6H3.2Z" fill="#fff"></path></svg>
<div class="a t " style="left: 904px; top: 623.52px; font-size: 6.8px; color: rgb(255, 255, 255); font-weight: bold; transform: scaleX(0.7877);">Sync</div>
<div class="a " style="left:921.40px;top:620.30px;width:13.40px;height:12.50px;background:#dc7c88;border-radius:1px 2px 2px 1px"></div>
<svg class="a" style="left:924.70px;top:622.80px;" width="6.5" height="6.7" viewBox="0 0 6.5 6.7"><path d="M0 0.9H6.5V1.8H0Z M2.2 0H4.3V0.9H2.2Z M0.6 2.2H5.9L5.4 6.7H1.1Z" fill="#fbe3e6"></path></svg>
<div class="a " style="left:42.80px;top:642.75px;width:947.50px;height:33.55px;background:#fdfdfd;border-bottom:1px solid #f0f0f1"></div>
<div class="a " style="left:46.90px;top:656.25px;width:7.40px;height:7.40px;background:#1eb27a;border-radius:50%;box-shadow:0 0 0 1px rgba(40,200,150,0.22),0 0 3px 1px rgba(60,220,160,0.35)"></div>
<div class="a t " style="left: 104.4px; top: 647.46px; font-size: 8.8px; color: rgb(52, 58, 68); font-weight: bold; transform: scaleX(0.8626);">Abu Garcia Beast Bladed Jig 2...</div>
<div class="a " style="left:105.00px;top:662.25px;width:22.80px;height:8.50px;background:#ededee;border-radius:2px"></div>
<div class="a t " style="left: 107.6px; top: 663.06px; font-size: 7.5px; color: rgb(102, 102, 102); transform: scaleX(0.8244);">Qty: 2</div>
<div class="a t " style="left: 306.7px; top: 656.57px; font-size: 8.1px; color: rgb(107, 107, 107); transform: scaleX(0.8564);">Product</div>
<div class="a " style="left:359.00px;top:656.20px;width:25.00px;height:9.35px;background:#faeef2;border-radius:2px"></div>
<div class="a t " style="left: 361.2px; top: 658.73px; font-size: 6.7px; color: rgb(201, 65, 111); font-family: &quot;Liberation Mono&quot;, monospace; transform: scaleX(0.8633);">No Ref</div>
<div class="a t " style="left: 437.5px; top: 649.81px; font-size: 8.8px; color: rgb(52, 58, 68); font-weight: bold; transform: scaleX(0.8648);">Abu Garcia Beast Bladed Jig 2...</div>
<div class="a t " style="left: 437.5px; top: 663.4px; font-size: 7.9px; color: rgb(106, 106, 106); transform: scaleX(0.8506);">Qty: 2.0000</div>
<div class="a t " style="left: 640.2px; top: 656.57px; font-size: 8.1px; color: rgb(154, 154, 154); transform: scaleX(0.8);">No SKU</div>
<div class="a " style="left:692.20px;top:653.35px;width:33.80px;height:14.10px;background:#d3f5e3;border-radius:7px"></div>
<div class="a t " style="left: 697.5px; top: 656.51px; font-size: 7.8px; color: rgb(30, 122, 80); font-weight: bold; transform: scaleX(0.7974);">ACTIVE</div>
<div class="a t " style="left: 782.8px; top: 656.57px; font-size: 8.1px; color: rgb(91, 91, 91); transform: scaleX(0.852);">5h ago</div>
<div class="a " style="left:859.20px;top:653.85px;width:32.30px;height:12.50px;background:#29a8d1;border-radius:2px 0 0 2px"></div>
<svg class="a" style="left:862.90px;top:657.35px;" width="8.3" height="5.4" viewBox="0 0 8.3 5.4"><path d="M0.3 2.7C1.5 0.9 2.8 0.2 4.15 0.2S6.8 0.9 8 2.7C6.8 4.5 5.5 5.2 4.15 5.2S1.5 4.5 0.3 2.7Z" fill="#fff"></path><circle cx="4.15" cy="2.7" r="1.5" fill="#29a8d1"></circle><circle cx="4.15" cy="2.7" r="0.7" fill="#fff"></circle></svg>
<div class="a t " style="left: 872.8px; top: 657.07px; font-size: 6.8px; color: rgb(255, 255, 255); font-weight: bold; transform: scaleX(0.9756);">View</div>
<div class="a " style="left:891.50px;top:653.85px;width:30.10px;height:12.50px;background:#62b86a;border-radius:0 1px 1px 0"></div>
<svg class="a" style="left:894.40px;top:656.35px;" width="7.5" height="7.5" viewBox="0 0 8 8"><g fill="none" stroke="#fff" stroke-width="1.4"><path d="M1.3 3.6A2.8 2.8 0 0 1 6.4 2.2"></path><path d="M6.7 4.4A2.8 2.8 0 0 1 1.6 5.8"></path></g><path d="M7.6 0.6V3.4H4.8Z" fill="#fff"></path><path d="M0.4 7.4V4.6H3.2Z" fill="#fff"></path></svg>
<div class="a t " style="left: 904px; top: 657.07px; font-size: 6.8px; color: rgb(255, 255, 255); font-weight: bold; transform: scaleX(0.7877);">Sync</div>
<div class="a " style="left:921.40px;top:653.85px;width:13.40px;height:12.50px;background:#dc7c88;border-radius:1px 2px 2px 1px"></div>
<svg class="a" style="left:924.70px;top:656.35px;" width="6.5" height="6.7" viewBox="0 0 6.5 6.7"><path d="M0 0.9H6.5V1.8H0Z M2.2 0H4.3V0.9H2.2Z M0.6 2.2H5.9L5.4 6.7H1.1Z" fill="#fbe3e6"></path></svg>
<div class="a " style="left:42.80px;top:676.30px;width:947.50px;height:33.55px;background:#f5f5f6;border-bottom:1px solid #f0f0f1"></div>
<div class="a " style="left:46.90px;top:689.80px;width:7.40px;height:7.40px;background:#1eb27a;border-radius:50%;box-shadow:0 0 0 1px rgba(40,200,150,0.22),0 0 3px 1px rgba(60,220,160,0.35)"></div>
<div class="a t " style="left: 104.4px; top: 681.01px; font-size: 8.8px; color: rgb(52, 58, 68); font-weight: bold; transform: scaleX(0.8626);">Abu Garcia Beast Bladed Jig 2...</div>
<div class="a " style="left:105.00px;top:695.80px;width:22.80px;height:8.50px;background:#ededee;border-radius:2px"></div>
<div class="a t " style="left: 107.6px; top: 696.61px; font-size: 7.5px; color: rgb(102, 102, 102); transform: scaleX(0.8244);">Qty: 0</div>
<div class="a t " style="left: 306.7px; top: 690.12px; font-size: 8.1px; color: rgb(107, 107, 107); transform: scaleX(0.8564);">Product</div>
<div class="a " style="left:359.00px;top:689.75px;width:25.00px;height:9.35px;background:#faeef2;border-radius:2px"></div>
<div class="a t " style="left: 361.2px; top: 692.28px; font-size: 6.7px; color: rgb(201, 65, 111); font-family: &quot;Liberation Mono&quot;, monospace; transform: scaleX(0.8633);">No Ref</div>
<div class="a t " style="left: 437.5px; top: 683.36px; font-size: 8.8px; color: rgb(52, 58, 68); font-weight: bold; transform: scaleX(0.8648);">Abu Garcia Beast Bladed Jig 2...</div>
<div class="a t " style="left: 437.5px; top: 696.95px; font-size: 7.9px; color: rgb(106, 106, 106); transform: scaleX(0.8506);">Qty: 0.0000</div>
<div class="a t " style="left: 640.2px; top: 690.12px; font-size: 8.1px; color: rgb(154, 154, 154); transform: scaleX(0.8);">No SKU</div>
<div class="a " style="left:692.20px;top:686.90px;width:33.80px;height:14.10px;background:#d3f5e3;border-radius:7px"></div>
<div class="a t " style="left: 697.5px; top: 690.06px; font-size: 7.8px; color: rgb(30, 122, 80); font-weight: bold; transform: scaleX(0.7974);">ACTIVE</div>
<div class="a t " style="left: 782.8px; top: 690.12px; font-size: 8.1px; color: rgb(91, 91, 91); transform: scaleX(0.852);">5h ago</div>
<div class="a " style="left:859.20px;top:687.40px;width:32.30px;height:12.50px;background:#29a8d1;border-radius:2px 0 0 2px"></div>
<svg class="a" style="left:862.90px;top:690.90px;" width="8.3" height="5.4" viewBox="0 0 8.3 5.4"><path d="M0.3 2.7C1.5 0.9 2.8 0.2 4.15 0.2S6.8 0.9 8 2.7C6.8 4.5 5.5 5.2 4.15 5.2S1.5 4.5 0.3 2.7Z" fill="#fff"></path><circle cx="4.15" cy="2.7" r="1.5" fill="#29a8d1"></circle><circle cx="4.15" cy="2.7" r="0.7" fill="#fff"></circle></svg>
<div class="a t " style="left: 872.8px; top: 690.62px; font-size: 6.8px; color: rgb(255, 255, 255); font-weight: bold; transform: scaleX(0.9756);">View</div>
<div class="a " style="left:891.50px;top:687.40px;width:30.10px;height:12.50px;background:#62b86a;border-radius:0 1px 1px 0"></div>
<svg class="a" style="left:894.40px;top:689.90px;" width="7.5" height="7.5" viewBox="0 0 8 8"><g fill="none" stroke="#fff" stroke-width="1.4"><path d="M1.3 3.6A2.8 2.8 0 0 1 6.4 2.2"></path><path d="M6.7 4.4A2.8 2.8 0 0 1 1.6 5.8"></path></g><path d="M7.6 0.6V3.4H4.8Z" fill="#fff"></path><path d="M0.4 7.4V4.6H3.2Z" fill="#fff"></path></svg>
<div class="a t " style="left: 904px; top: 690.62px; font-size: 6.8px; color: rgb(255, 255, 255); font-weight: bold; transform: scaleX(0.7877);">Sync</div>
<div class="a " style="left:921.40px;top:687.40px;width:13.40px;height:12.50px;background:#dc7c88;border-radius:1px 2px 2px 1px"></div>
<svg class="a" style="left:924.70px;top:689.90px;" width="6.5" height="6.7" viewBox="0 0 6.5 6.7"><path d="M0 0.9H6.5V1.8H0Z M2.2 0H4.3V0.9H2.2Z M0.6 2.2H5.9L5.4 6.7H1.1Z" fill="#fbe3e6"></path></svg>
<div class="a " style="left:3.50px;top:705.60px;width:1019.00px;height:2.40px;background:#fcfcfc;border-top:1px solid #ebebeb"></div>
<div class="a " style="left:0.00px;top:703.50px;width:3.50px;height:4.50px;background:linear-gradient(45deg,#222 50%,transparent 50%)"></div>
<div class="a " style="left:1020.00px;top:703.50px;width:4.00px;height:4.50px;background:linear-gradient(-45deg,#222 50%,transparent 50%)"></div>
</div></body></html>
